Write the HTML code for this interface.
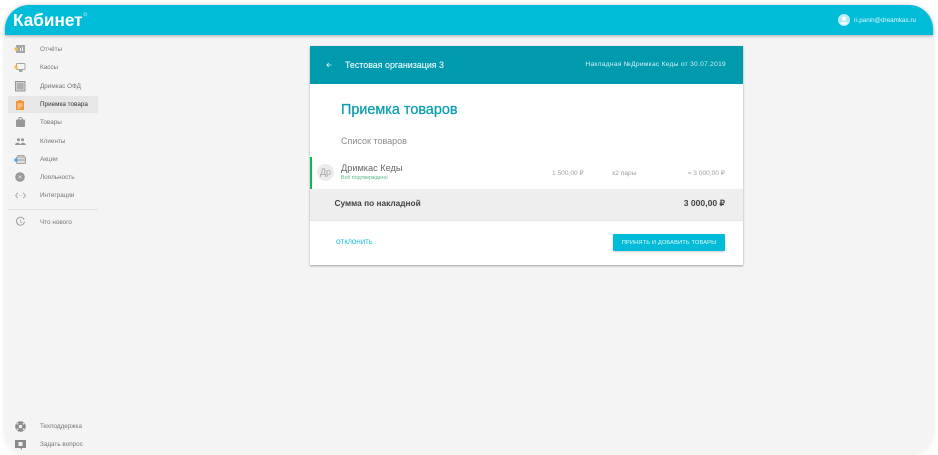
<!DOCTYPE html>
<html><head><meta charset="utf-8"><style>
*{box-sizing:border-box}
html,body{margin:0;padding:0;width:938px;height:455px;overflow:hidden;background:#fff;font-family:"Liberation Sans",sans-serif}
#p{position:absolute;left:0;top:0;width:938px;height:455px;filter:blur(.3px)}
.win{position:absolute;left:5px;top:5px;width:928px;height:450px;background:#f4f4f4;border-radius:24px;overflow:hidden;box-shadow:0 0 6px rgba(120,150,160,.22)}
.t{position:absolute;white-space:nowrap;line-height:1}
.bar{position:absolute;left:5px;top:5px;width:928px;height:30px;background:#00bcd9;border-radius:24px 24px 0 0;box-shadow:0 1px 3px rgba(0,0,0,.3)}
.m{position:absolute;left:40px;font-size:6.3px;color:#757575;line-height:8px;white-space:nowrap;letter-spacing:.02px}
svg{position:absolute;overflow:visible}
</style></head><body><div id="p">
<div class="win"></div>
<div class="bar"></div>
<div class="t" style="left:13px;top:12px;font-size:17.2px;font-weight:bold;color:#fff">Кабинет</div>
<svg style="left:83px;top:12px" width="5" height="5"><circle cx="2.2" cy="2.2" r="1.4" fill="none" stroke="#b5eaf3" stroke-width=".6"/></svg>
<svg style="left:838px;top:14px" width="12" height="12" viewBox="0 0 12 12"><circle cx="6" cy="6" r="6" fill="#b8eaf4"/><circle cx="6" cy="4.6" r="2" fill="#fff"/><path d="M2.4 9.2c.8-1.6 6.4-1.6 7.2 0-.9 1-2.2 1.5-3.6 1.5s-2.7-.5-3.6-1.5z" fill="#fff"/></svg>
<div class="t" style="left:854px;top:17.5px;font-size:6.3px;color:#e6f8fb">n.panin@dreamkas.ru</div>

<div style="position:absolute;left:8px;top:96px;width:90px;height:17px;background:#e6e6e6"></div>
<div style="position:absolute;left:8px;top:209px;width:90px;height:1px;background:#e3e3e3"></div>

<div class="m" style="top:45.5px">Отчёты</div>
<div class="m" style="top:64px">Кассы</div>
<div class="m" style="top:82.5px">Дримкас ОФД</div>
<div class="m" style="top:100.5px;color:#333">Приемка товара</div>
<div class="m" style="top:119px">Товары</div>
<div class="m" style="top:137.5px">Клиенты</div>
<div class="m" style="top:155.5px">Акции</div>
<div class="m" style="top:173.5px">Лояльность</div>
<div class="m" style="top:191.5px">Интеграции</div>
<div class="m" style="top:218.5px">Что нового</div>
<div class="m" style="top:422.5px">Техподдержка</div>
<div class="m" style="top:441px">Задать вопрос</div>

<svg style="left:14px;top:45px;opacity:.9" width="12" height="9"><rect x="2" y="0" width="9" height="8" fill="#9e9e9e"/><path d="M6 6V3h1v3zM8 6V2h1v4z" fill="#eee"/><circle cx="2" cy="4" r="1.7" fill="#ffb43a"/></svg>
<svg style="left:14px;top:63px;opacity:.9" width="12" height="10"><rect x="2.5" y=".5" width="8.5" height="6" rx=".8" fill="#f4f4f4" stroke="#9e9e9e" stroke-width="1"/><rect x="5" y="7" width="3.5" height="2" fill="#9e9e9e"/><circle cx="2" cy="4" r="1.7" fill="#ffb43a"/></svg>
<svg style="left:15px;top:81px;opacity:.9" width="11" height="11"><rect x=".5" y=".5" width="9.5" height="9.5" fill="#d0d0d0" stroke="#8f8f8f"/><rect x="2" y="2" width="6.5" height="6.5" fill="#a8a8a8"/></svg>
<svg style="left:16px;top:100px" width="8" height="10"><rect x="0" y="1" width="8" height="9" rx="1" fill="#f59331"/><rect x="2.5" y="0" width="3" height="2" fill="#f59331"/><path d="M1.500 4h5M1.500 6h5M1.500 8h3" stroke="#fff" stroke-width=".8"/></svg>
<svg style="left:16px;top:117px;opacity:.9" width="9" height="10"><path d="M2.8 3V1.5C2.8.2 6.2.2 6.2 1.5V3" fill="none" stroke="#8f8f8f"/><rect x="0" y="2.5" width="9" height="7.5" rx="1" fill="#8f8f8f"/></svg>
<svg style="left:15px;top:138px;opacity:.9" width="11" height="8"><circle cx="3.5" cy="1.8" r="1.5" fill="#8c8c8c"/><circle cx="7.5" cy="1.8" r="1.5" fill="#8c8c8c"/><path d="M0 7c0-3 5-3 5.5 0zM5.5 7c0-3 5-3 5.500 0z" fill="#8c8c8c"/></svg>
<svg style="left:14px;top:154px" width="12" height="10"><rect x="2.5" y="3" width="9" height="6.5" rx="1" fill="#dcdcdc" stroke="#8f8f8f" stroke-width=".8"/><path d="M4 3V1.5h6V3M3 6h8" stroke="#8f8f8f" stroke-width=".8" fill="none"/><circle cx="2" cy="6" r="1.7" fill="#3fa4f0"/></svg>
<svg style="left:15px;top:172px;opacity:.9" width="10" height="10"><circle cx="5" cy="5" r="4.8" fill="#8f8f8f"/><path d="M3.5 3.5l3 3M6.5 3.5l-3 3" stroke="#ddd" stroke-width=".8"/></svg>
<svg style="left:15px;top:192px" width="11" height="7"><path d="M2.8 .8L.6 3.5l2.2 2.7M8.2 .8l2.2 2.7-2.2 2.7" fill="none" stroke="#999" stroke-width=".8"/><path d="M4.5 3.5h.6M6 3.5h.6" stroke="#999" stroke-width=".8"/></svg>
<svg style="left:16px;top:217px" width="9" height="9"><path d="M7.5 1.5A4 4 0 1 0 8.5 4.5" fill="none" stroke="#999" stroke-width=".9"/><path d="M4.5 2.5v2.3l1.5 1" fill="none" stroke="#999" stroke-width=".7"/><circle cx="7.5" cy="1.8" r=".8" fill="#999"/></svg>
<svg style="left:15px;top:421px" width="11" height="11"><circle cx="5.5" cy="5.5" r="5.3" fill="#8a8a8a"/><circle cx="5.5" cy="5.5" r="1.8" fill="#eee"/><circle cx="2.5" cy="2.8" r="1" fill="#ddd"/><circle cx="8.5" cy="2.8" r="1" fill="#ddd"/><circle cx="2.5" cy="8.2" r="1" fill="#ddd"/><circle cx="8.5" cy="8.2" r="1" fill="#ddd"/></svg>
<svg style="left:15px;top:440px" width="11" height="10"><path d="M0 0h11v8H7L7 10 5 8H0z" fill="#8a8a8a"/><rect x="3.5" y="2" width="4" height="4" fill="#eee"/></svg>

<div style="position:absolute;left:310px;top:46px;width:433px;height:219px;background:#fff;box-shadow:0 1px 2px rgba(0,0,0,.35)">
  <div style="position:absolute;left:0;top:0;width:433px;height:38px;background:#009aae"></div>
  <svg style="left:16px;top:15.5px" width="6" height="6"><path d="M5.500 3H1M2.800 1L.8 3 2.800 5" fill="none" stroke="#d8f3f7" stroke-width=".8"/></svg>
  <div class="t" style="left:35px;top:14.5px;font-size:8.9px;color:#eefafc;-webkit-text-stroke:.1px #eefafc">Тестовая организация 3</div>
  <div class="t" style="right:17px;top:15.5px;font-size:6.6px;color:#d8f1f5;letter-spacing:.29px">Накладная №Дримкас Кеды от 30.07.2019</div>
  <div class="t" style="left:31px;top:57px;font-size:14.4px;color:#0b9db0;-webkit-text-stroke:.25px #0b9db0">Приемка товаров</div>
  <div class="t" style="left:31px;top:90.5px;font-size:9px;color:#8a8a8a">Список товаров</div>
  <div style="position:absolute;left:0;top:111px;width:2px;height:32px;background:#10b55a"></div>
  <div style="position:absolute;left:7px;top:118px;width:17px;height:17px;border-radius:50%;background:#ebebeb;color:#a5a5a5;font-size:9px;line-height:17px;text-align:center">Др</div>
  <div class="t" style="left:31px;top:118px;font-size:9.2px;color:#666">Дримкас Кеды</div>
  <div class="t" style="left:31px;top:129.5px;font-size:5.4px;color:#55b884">Всё подтверждено</div>
  <div class="t" style="left:242px;top:124.5px;font-size:6.6px;color:#a0a0a0">1 500,00 ₽</div>
  <div class="t" style="left:302px;top:124.5px;font-size:6.6px;color:#a0a0a0">x2 пары</div>
  <div class="t" style="right:18px;top:124.5px;font-size:6.6px;color:#a0a0a0">= 3 000,00 ₽</div>
  <div style="position:absolute;left:0;top:143px;width:433px;height:32px;background:#eeeeee;border-bottom:1px solid #e6e6e6"></div>
  <div class="t" style="left:24.5px;top:153px;font-size:8.3px;font-weight:bold;color:#424242">Сумма по накладной</div>
  <div class="t" style="right:18px;top:153px;font-size:8.6px;font-weight:bold;color:#424242">3 000,00 ₽</div>
  <div class="t" style="left:26px;top:193.5px;font-size:6px;color:#00bcd9">ОТКЛОНИТЬ</div>
  <div style="position:absolute;left:303px;top:188px;width:112px;height:17px;background:#00bcd9;border-radius:1px;box-shadow:0 1px 2px rgba(0,0,0,.2);color:#e8fafd;font-size:5.7px;line-height:18px;text-align:center;letter-spacing:.15px">ПРИНЯТЬ И ДОБАВИТЬ ТОВАРЫ</div>
</div>
</div></body></html>
